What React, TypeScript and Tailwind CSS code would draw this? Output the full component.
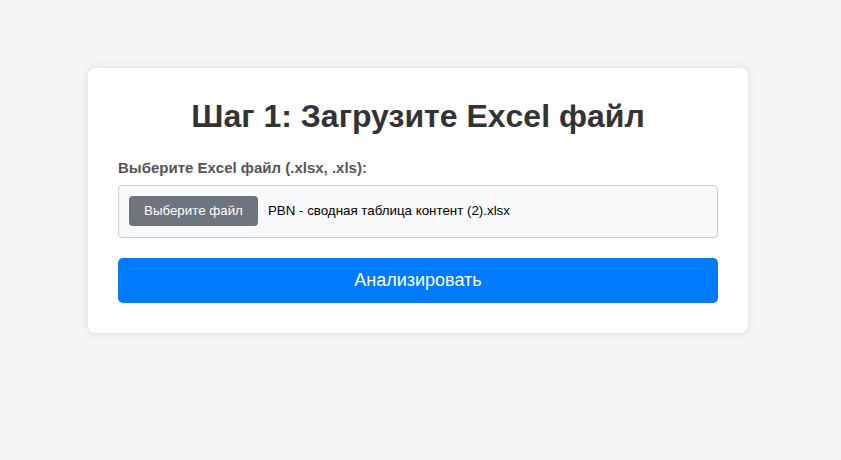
export default function App() {
  return (
    <div className="min-h-screen bg-[#f4f5f5] pt-[68px] font-['Liberation_Sans',Arial,sans-serif]">
      <div className="ml-[88px] w-[660px] rounded-lg bg-white p-[30px] shadow-[0_0_10px_rgba(0,0,0,0.1)]">
        <h2 className="mb-[24px] mt-0 text-center text-[32px] font-bold leading-[37px] text-[#333]">
          Шаг 1: Загрузите Excel файл
        </h2>
        <label className="mb-[9px] block text-[15px] font-bold leading-[17px] text-[#555]">
          Выберите Excel файл (.xlsx, .xls):
        </label>
        <div className="flex items-center gap-[10px] rounded border border-[#ccc] bg-[#f8f9fa] px-[10px] pb-[11px] pt-[10px]">
          <span className="flex h-[30px] items-center rounded bg-[#6c757d] px-[15px] text-[13.33px] text-white">
            Выберите файл
          </span>
          <span className="text-[13.33px] text-black">PBN - сводная таблица контент (2).xlsx</span>
        </div>
        <button className="mt-5 flex h-[45px] w-full items-center justify-center rounded-[5px] bg-[#007bff] text-[18px] text-white">
          Анализировать
        </button>
      </div>
    </div>
  )
}
